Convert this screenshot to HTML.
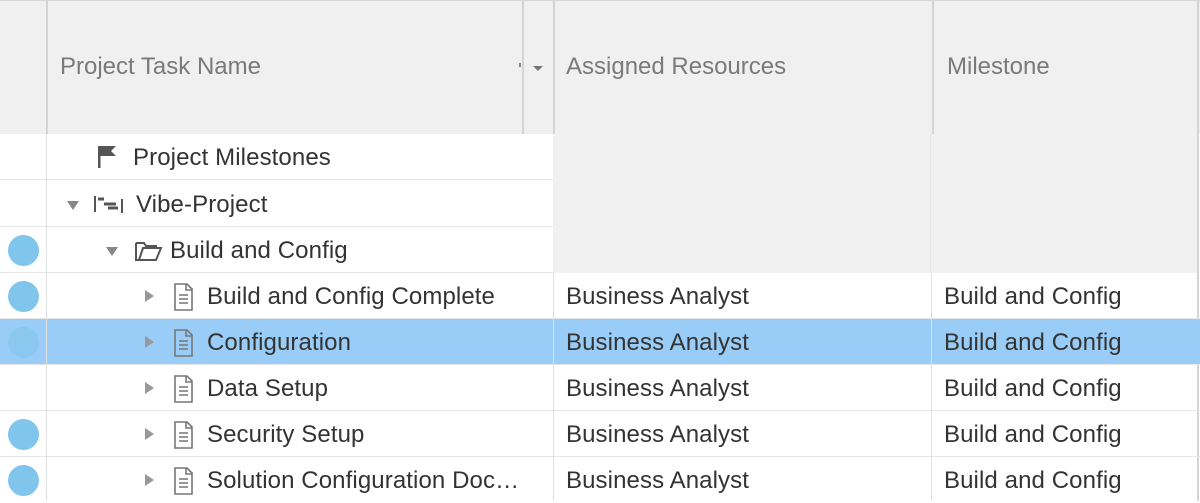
<!DOCTYPE html>
<html><head><style>
*{margin:0;padding:0;box-sizing:border-box}
body{width:1200px;height:501px;overflow:hidden;background:#fff;font-family:"Liberation Sans",sans-serif;position:relative}
.a{position:absolute}
.hd{background:#f0f0f0;top:0;height:134px}
.ht{position:absolute;top:53px;font-size:24px;color:#7a7a7a;letter-spacing:0}
.vl{position:absolute;width:2px;background:#d4d4d4}
.row{position:absolute;left:0;width:1200px;height:46px;border-bottom:1px solid #e6e6e6}
.t{position:absolute;font-size:24px;color:#333;letter-spacing:0.1px;top:10px;white-space:nowrap}
.dot{position:absolute;left:8px;top:8px;width:31px;height:31px;border-radius:50%;background:#80c5eb}
.tri{position:absolute;top:17px;width:0;height:0;border-top:6px solid transparent;border-bottom:6px solid transparent;border-left:9px solid #999}
.trd{position:absolute;top:20px;width:0;height:0;border-left:6px solid transparent;border-right:6px solid transparent;border-top:9px solid #888}
</style></head><body>
<div class="a hd" style="left:0;width:1200px;border-top:1px solid #d8d8d8"></div>
<div class="vl" style="left:46px;top:0;height:134px"></div>
<div class="vl" style="left:522px;top:0;height:134px"></div>
<div class="vl" style="left:553px;top:0;height:134px"></div>
<div class="vl" style="left:932px;top:0;height:134px"></div>
<div class="vl" style="left:1197px;top:0;height:501px"></div>
<div class="ht" style="left:60px">Project Task Name</div>
<div class="a" style="left:519px;top:63px;width:2px;height:4px;background:#888"></div>
<div class="a" style="left:533px;top:66px;border-left:5px solid transparent;border-right:5px solid transparent;border-top:5px solid #777"></div>
<div class="ht" style="left:566px">Assigned Resources</div>
<div class="ht" style="left:947px">Milestone</div>
<div class="a" style="left:553px;top:134px;width:644px;height:139px;background:#f0f0f0"></div>
<div class="a" style="left:930px;top:134px;width:1px;height:139px;background:#e6e6e6"></div>

<div class="row" style="top:134px;width:553px"><svg class="a" style="left:98px;top:11px" width="22" height="24"><path d="M1 1v22" stroke="#555" stroke-width="3"/><path d="M2 1h16l-5 5 5 5H2z" fill="#555"/></svg><div class="t" style="left:133px">Project Milestones</div></div>
<div class="row" style="top:181px;width:553px"><div class="trd" style="left:67px"></div><svg class="a" style="left:94px;top:14px" width="30" height="20"><path d="M1 1v16M28 4v14" stroke="#555" stroke-width="2"/><path d="M4 4h6M10 9h12M14 13h10" stroke="#555" stroke-width="3"/></svg><div class="t" style="left:136px">Vibe-Project</div></div>
<div class="row" style="top:227px;width:553px"><div class="dot"></div><div class="trd" style="left:106px"></div><svg class="a" style="left:135px;top:13px" width="28" height="22"><path d="M1 3v17h20l5-12H8L4 20M1 3h8l2 3h10v2" fill="none" stroke="#555" stroke-width="2"/></svg><div class="t" style="left:170px">Build and Config</div></div>

<div class="row" style="top:273px"><div class="dot"></div></div>
<div class="row" style="top:319px;background:#99cdf7"><div class="dot" style="background:#8ac8ef"></div></div>
<div class="row" style="top:365px"></div>
<div class="row" style="top:411px"><div class="dot"></div></div>
<div class="row" style="top:457px;border:0"><div class="dot"></div></div>
<div class="vl" style="left:46px;top:134px;height:367px;width:1px;background:#e0e0e0"></div>
<div class="vl" style="left:553px;top:273px;height:228px;width:1px;background:#e0e0e0"></div>
<div class="vl" style="left:931px;top:273px;height:228px;width:1px;background:#e0e0e0"></div>

<div id="rows"></div>
<script>
var n=["Build and Config Complete","Configuration","Data Setup","Security Setup","Solution Configuration Doc…"];
var h="";
n.forEach(function(s,i){var y=273+i*46;
h+='<div class="tri" style="left:145px;top:'+(y+17)+'px"></div>';
h+='<svg class="a" style="left:174px;top:'+(y+10)+'px" width="20" height="28"><path d="M1 1h12l5 5v21H1z" fill="none" stroke="#777" stroke-width="1.6"/><path d="M12 1v6h6M5 12h9M5 16h9M5 20h9" fill="none" stroke="#777" stroke-width="1.6"/></svg>';
h+='<div class="t" style="left:207px;top:'+(y+10)+'px">'+s+'</div>';
h+='<div class="t" style="left:566px;top:'+(y+10)+'px">Business Analyst</div>';
h+='<div class="t" style="left:944px;top:'+(y+10)+'px">Build and Config</div>';});
document.getElementById("rows").innerHTML=h;
</script>
</body></html>
